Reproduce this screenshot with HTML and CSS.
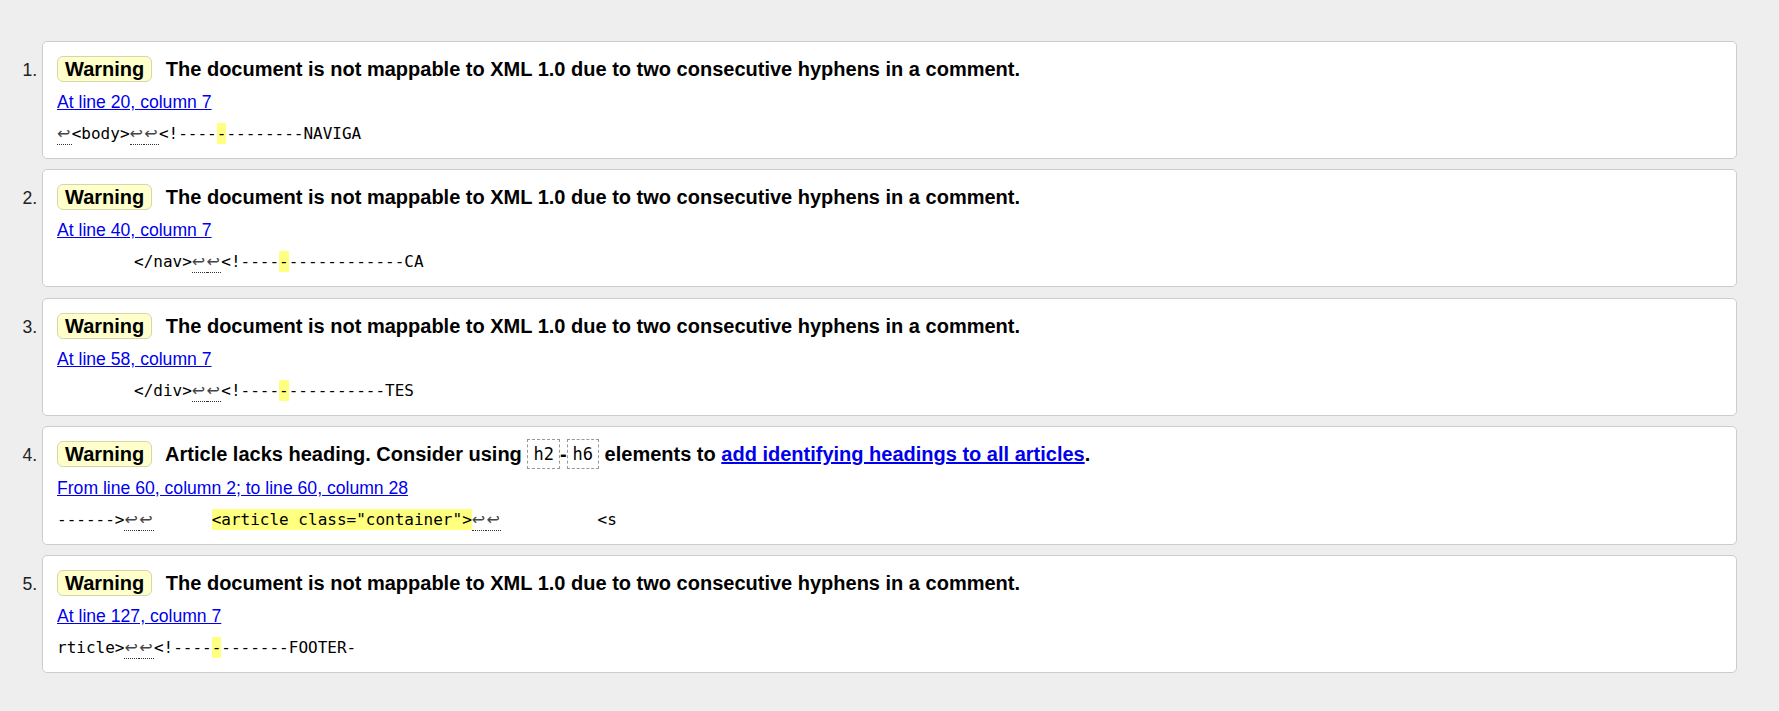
FILE: index.html
```html
<!DOCTYPE html>
<html lang="en">
<head>
<meta charset="utf-8">
<title>Validation messages</title>
<link rel="stylesheet" href="styles.css">
</head>
<body>
<ol class="messages">
  <li class="message">
    <p class="msg"><strong class="badge">Warning</strong> The document is not mappable to XML 1.0 due to two consecutive hyphens in a comment.</p>
    <p class="location"><a href="#l20">At line 20, column 7</a></p>
    <p class="extract"><span class="lf" title="Line break">↩</span>&lt;body&gt;<span class="lf" title="Line break">↩</span><span class="lf" title="Line break">↩</span>&lt;!----<b class="hl">-</b>--------NAVIGA</p>
  </li>
  <li class="message">
    <p class="msg"><strong class="badge">Warning</strong> The document is not mappable to XML 1.0 due to two consecutive hyphens in a comment.</p>
    <p class="location"><a href="#l40">At line 40, column 7</a></p>
    <p class="extract">        &lt;/nav&gt;<span class="lf" title="Line break">↩</span><span class="lf" title="Line break">↩</span>&lt;!----<b class="hl">-</b>------------CA</p>
  </li>
  <li class="message">
    <p class="msg"><strong class="badge">Warning</strong> The document is not mappable to XML 1.0 due to two consecutive hyphens in a comment.</p>
    <p class="location"><a href="#l58">At line 58, column 7</a></p>
    <p class="extract">        &lt;/div&gt;<span class="lf" title="Line break">↩</span><span class="lf" title="Line break">↩</span>&lt;!----<b class="hl">-</b>----------TES</p>
  </li>
  <li class="message">
    <p class="msg"><strong class="badge">Warning</strong> Article lacks heading. Consider using <code class="code">h2</code>-<code class="code">h6</code> elements to <a href="#headings">add identifying headings to all articles</a>.</p>
    <p class="location"><a href="#l60">From line 60, column 2; to line 60, column 28</a></p>
    <p class="extract">------&gt;<span class="lf" title="Line break">↩</span><span class="lf" title="Line break">↩</span>      <b class="hl">&lt;article class="container"&gt;</b><span class="lf" title="Line break">↩</span><span class="lf" title="Line break">↩</span>          &lt;s</p>
  </li>
  <li class="message">
    <p class="msg"><strong class="badge">Warning</strong> The document is not mappable to XML 1.0 due to two consecutive hyphens in a comment.</p>
    <p class="location"><a href="#l127">At line 127, column 7</a></p>
    <p class="extract">rticle&gt;<span class="lf" title="Line break">↩</span><span class="lf" title="Line break">↩</span>&lt;!----<b class="hl">-</b>-------FOOTER-</p>
  </li>
</ol>
</body>
</html>
```
FILE: styles.css
```css
html {
  background: #eeeeee;
}

body {
  margin: 0;
  font-family: "Liberation Sans", Arial, sans-serif;
  color: #000;
}

.messages {
  margin: 41px 42px;
  padding: 0;
  list-style: decimal outside;
}

.message {
  background: #fff;
  border: 1px solid #cccccc;
  border-radius: 5px;
  padding: 14px 14px 13px;
  margin: 0 0 10.3px;
  font-size: 17.6px;
}

.message::marker {
  color: #222;
}

.msg {
  margin: 0;
  font-size: 20px;
  font-weight: bold;
  line-height: 26px;
}

.badge {
  display: inline-block;
  line-height: 24px;
  padding: 0 7px;
  margin-right: 8px;
  border: 1px solid #d6d6aa;
  border-radius: 6px;
  background: #ffffcc;
  font-weight: bold;
}

.msg a {
  color: #0000ee;
}

.code {
  font-family: "DejaVu Sans Mono", "Liberation Mono", monospace;
  font-size: 17px;
  line-height: 27px;
  font-weight: normal;
  border: 1px dashed #999;
  padding: 4px 5px;
  vertical-align: 1px;
}

.location {
  margin: 9px 0 0;
  line-height: 22px;
}

.location a {
  color: #0000ee;
}

.extract {
  margin: 10px 0 0;
  font-family: "DejaVu Sans Mono", "Liberation Mono", monospace;
  font-size: 16px;
  line-height: 22px;
  white-space: pre;
}

.hl {
  font-weight: normal;
  background: #ffff80;
  padding: 1px 0;
}

.lf {
  font-family: "DejaVu Sans", sans-serif;
  letter-spacing: 1.3px;
  color: #444;
  border-bottom: 1px dotted #333;
  padding: 1px 0;
}
```
